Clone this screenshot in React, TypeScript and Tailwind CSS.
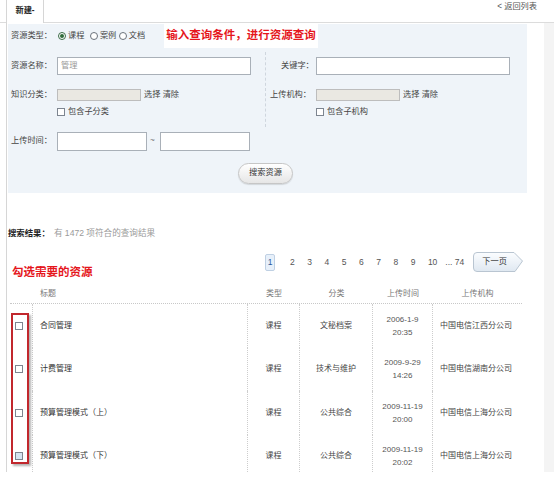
import React from "react";

function Radio({ checked }: { checked?: boolean }) {
  return (
    <span
      className={`flex h-[8px] w-[8px] items-center justify-center rounded-full border ${
        checked ? "border-[#3a6a45]" : "border-[#6b737c]"
      } bg-white`}
    >
      {checked && <span className="h-[4px] w-[4px] rounded-full bg-[#2f6b3a]" />}
    </span>
  );
}

function Check({ tint }: { tint?: boolean }) {
  return (
    <span
      className={`block h-[8px] w-[8px] border border-[#7d8590] ${tint ? "bg-[#d5e4f1]" : "bg-white"}`}
    />
  );
}

const rows = [
  { title: "合同管理", type: "课程", cat: "文秘档案", d: "2006-1-9", t: "20:35", org: "中国电信江西分公司" },
  { title: "计费管理", type: "课程", cat: "技术与维护", d: "2009-9-29", t: "14:26", org: "中国电信湖南分公司" },
  { title: "预算管理模式（上）", type: "课程", cat: "公共综合", d: "2009-11-19", t: "20:00", org: "中国电信上海分公司" },
  { title: "预算管理模式（下）", type: "课程", cat: "公共综合", d: "2009-11-19", t: "20:02", org: "中国电信上海分公司" },
];

const cell = "border-r border-dotted border-[#cdcdcd] h-[43.5px] flex items-center";

export default function App() {
  return (
    <div className="h-[494px] w-[554px] overflow-hidden bg-white font-['Liberation_Sans','Noto_Sans_CJK_SC',sans-serif] text-[#333]">
      {/* header */}
      <div className="flex h-[23px] border-b border-[#dcdcdc]">
        <div className="relative z-10 -mb-px ml-[6px] flex h-[23px] w-[38px] items-center justify-center border-x border-[#d6d6d6] bg-white text-[8.2px] font-bold text-[#222]">
          新建-
        </div>
        <div className="flex-1" />
        <div className="pr-[17px] pt-[1px] text-[8.2px] leading-[12px] text-[#555]">&lt; 返回列表</div>
      </div>

      <div className="flex h-[449px]">
        <div className="relative ml-[6px] w-[538px] overflow-hidden border-l border-[#d6d6d6]">
          {/* search panel */}
          <div className="ml-[1px] mt-[1px] h-[169px] w-[519px] bg-[#eff4f9] text-[8.2px] text-[#444]">
            <div className="flex h-[24px] items-center pl-[3px]">
              <span className="w-[47px]">资源类型：</span>
              <Radio checked />
              <span className="ml-[2px]">课程</span>
              <span className="ml-[5.5px]">
                <Radio />
              </span>
              <span className="ml-[2px]">案例</span>
              <span className="ml-[2.5px]">
                <Radio />
              </span>
              <span className="ml-[2px]">文档</span>
              <span className="ml-[19px] flex h-full items-center bg-white px-[2px] text-[11.5px] font-bold text-[#e5161c]">
                输入查询条件，进行资源查询
              </span>
            </div>

            <div className="mt-[4px] flex h-[75px]">
              <div className="w-[258px] border-r border-dashed border-[#cfd6de] pl-[3px] pt-[5px]">
                <div className="flex h-[18px] items-center">
                  <span className="w-[46px]">资源名称：</span>
                  <span className="flex h-[18px] w-[194px] items-center border border-[#a9b0b8] bg-white pl-[3px] text-[#999]">
                    管理
                  </span>
                </div>
                <div className="mt-[9px] flex h-[22px] items-center">
                  <span className="w-[46px]">知识分类：</span>
                  <span className="h-[12px] w-[84px] border border-[#bdbdbd] bg-[#eae8e2]" />
                  <span className="ml-[3px]">选择 清除</span>
                </div>
                <div className="flex h-[12px] items-center pl-[46px]">
                  <Check />
                  <span className="ml-[3px]">包含子分类</span>
                </div>
              </div>
              <div className="flex-1 pl-[4px] pt-[5px]">
                <div className="flex h-[18px] items-center">
                  <span className="w-[46px] pl-[11px]">关键字：</span>
                  <span className="h-[18px] w-[194px] border border-[#a9b0b8] bg-white" />
                </div>
                <div className="mt-[9px] flex h-[22px] items-center">
                  <span className="w-[46px]">上传机构：</span>
                  <span className="h-[12px] w-[84px] border border-[#bdbdbd] bg-[#eae8e2]" />
                  <span className="ml-[3px]">选择 清除</span>
                </div>
                <div className="flex h-[12px] items-center pl-[46px]">
                  <Check />
                  <span className="ml-[3px]">包含子机构</span>
                </div>
              </div>
            </div>

            <div className="mt-[5px] flex h-[19px] items-center pl-[3px]">
              <span className="w-[46px]">上传时间：</span>
              <span className="h-[19px] w-[90px] border border-[#a9b0b8] bg-white" />
              <span className="w-[13px] pl-[3px] text-[#777]">~</span>
              <span className="h-[19px] w-[90px] border border-[#a9b0b8] bg-white" />
            </div>

            <div className="ml-[230px] mt-[12px] flex h-[21px] w-[55px] items-center justify-center rounded-full border border-[#c6c6c6] bg-gradient-to-b from-[#ffffff] to-[#e6e6e6] text-[8.2px] text-[#333] shadow-[0_1px_1px_rgba(0,0,0,0.12)]">
              搜索资源
            </div>
          </div>

          {/* results */}
          <div className="mt-[34px] flex h-[12px] items-center pl-[1px] text-[8.4px]">
            <span className="font-bold text-[#222]">搜索结果：</span>
            <span className="ml-[4px] text-[8.6px] text-[#9a9a9a]">有 1472 项符合的查询结果</span>
          </div>

          <div className="mt-[13px] flex h-[30px]">
            <div className="w-[258px] pl-[5px] pt-[13px] text-[11.5px] font-bold leading-[14px] text-[#e5161c]">
              勾选需要的资源
            </div>
            <div className="flex h-[20px] items-center text-[8.5px] text-[#555]">
              <span className="flex h-[17px] w-[10px] items-center justify-center rounded-[2px] border border-[#bfd0e3] bg-[#e7f0fa] text-[#2a5a9a]">
                1
              </span>
              <span className="ml-[15px]">2</span>
              <span className="ml-[12.5px]">3</span>
              <span className="ml-[12.5px]">4</span>
              <span className="ml-[12.5px]">5</span>
              <span className="ml-[12.5px]">6</span>
              <span className="ml-[12.5px]">7</span>
              <span className="ml-[12.5px]">8</span>
              <span className="ml-[12.5px]">9</span>
              <span className="ml-[12.5px]">10</span>
              <span className="ml-[8px] whitespace-pre">... 74</span>
              <span className="relative ml-[9px] flex h-[20px] w-[50px] items-center pl-[9px] text-[8.2px] text-[#333]">
                <svg className="absolute left-0 top-0" width="50" height="20" viewBox="0 0 50 20">
                  <defs>
                    <linearGradient id="nb" x1="0" y1="0" x2="0" y2="1">
                      <stop offset="0" stopColor="#fbfdff" />
                      <stop offset="1" stopColor="#dfe8f1" />
                    </linearGradient>
                  </defs>
                  <path
                    d="M4 0.5 H41 L49.5 9 L42 19.5 H4 Q0.5 19.5 0.5 16 V4 Q0.5 0.5 4 0.5 Z"
                    fill="url(#nb)"
                    stroke="#b9c5d1"
                  />
                </svg>
                <span className="relative">下一页</span>
              </span>
            </div>
          </div>

          {/* table */}
          <div className="relative ml-[3px] w-[512px]">
            <div className="grid h-[22px] grid-cols-[23px_215px_52px_73px_60px_89px] border-b border-dotted border-[#c8c8c8] pt-[3px] text-[8px] text-[#777]">
              <span />
              <span className="flex items-center pl-[7px]">标题</span>
              <span className="flex items-center justify-center">类型</span>
              <span className="flex items-center justify-center">分类</span>
              <span className="flex items-center justify-center">上传时间</span>
              <span className="flex items-center justify-center">上传机构</span>
            </div>
            {rows.map((r, i) => (
              <div key={i} className="grid grid-cols-[23px_215px_52px_73px_60px_89px] text-[8px] text-[#444]">
                <div className={`${cell} pl-[5px]`}>
                  <Check tint={i === 3} />
                </div>
                <div className={`${cell} pl-[7px] text-[#333]`}>{r.title}</div>
                <div className={`${cell} justify-center`}>{r.type}</div>
                <div className={`${cell} justify-center`}>{r.cat}</div>
                <div className={`${cell} flex-col justify-center text-center leading-[13px] text-[#555]`}>
                  <span>{r.d}</span>
                  <span>{r.t}</span>
                </div>
                <div className="flex h-[43.5px] items-center pl-[7px]">{r.org}</div>
              </div>
            ))}
            <div className="absolute left-[1px] top-[31px] h-[151px] w-[18px] border-2 border-[#c1272d] shadow-[2px_2px_2px_rgba(0,0,0,0.3)]" />
          </div>
        </div>
        <div className="flex-1 bg-[#f4f4f4]" />
      </div>
    </div>
  );
}
